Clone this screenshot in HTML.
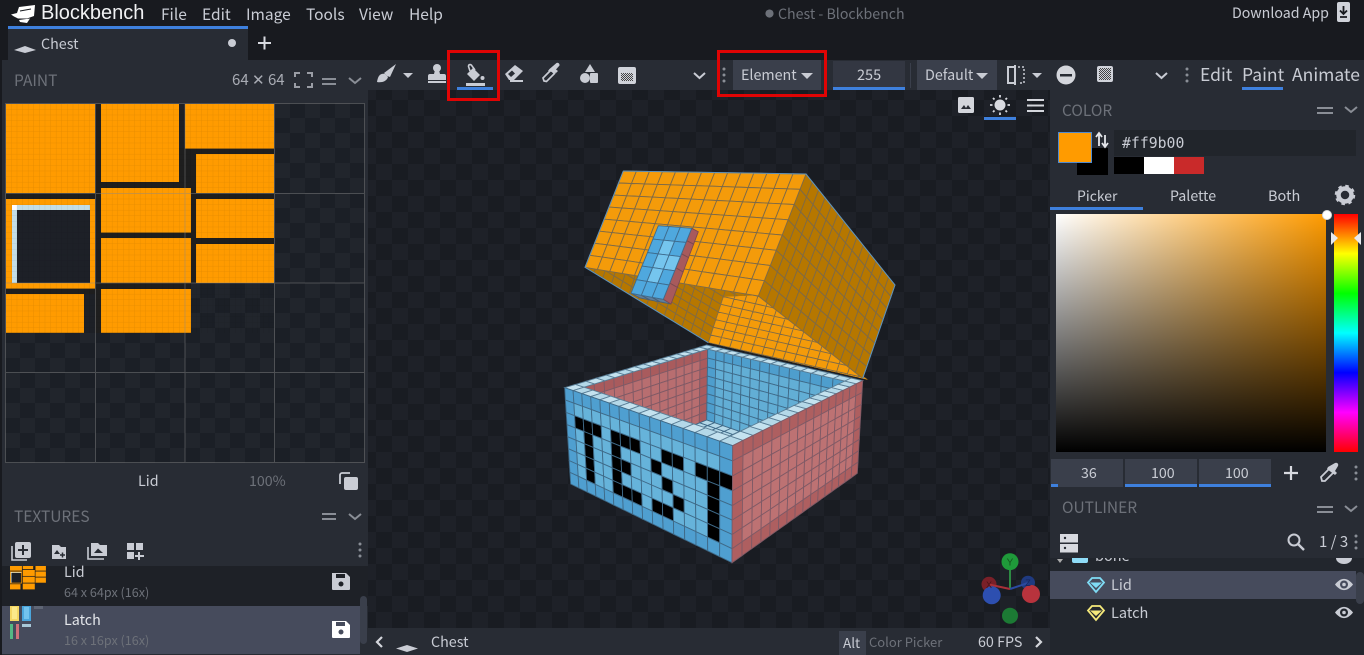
<!DOCTYPE html>
<html><head><meta charset="utf-8"><title>Chest - Blockbench</title>
<style>
html,body{margin:0;padding:0;width:1364px;height:655px;overflow:hidden;background:#181a1f}
body{position:relative;font-family:"Noto Sans CJK JP","Liberation Sans",sans-serif;color:#c9ccd4}
.b{position:absolute}
.t{position:absolute;line-height:20px;height:20px;white-space:nowrap;font-size:15px}
.g{color:#6d7179}
svg{position:absolute;left:0;top:0;overflow:hidden}
</style></head><body>
<!-- structure -->
<div class="b" style="left:2px;top:60px;width:1362px;height:30px;background:#282c34"></div>
<div class="b" style="left:8px;top:26px;width:240px;height:3px;background:#3e80dd"></div>
<div class="b" style="left:8px;top:29px;width:240px;height:31px;background:#282c34"></div>
<div class="b" style="left:2px;top:90px;width:366px;height:565px;background:#282c34"></div>
<div class="b" style="left:368px;top:90px;width:682px;height:538px;background:repeating-conic-gradient(#191c22 0 25%,#1e2128 0 50%) 8px 10px/32px 32px"></div>
<div class="b" style="left:368px;top:628px;width:682px;height:27px;background:#282c34"></div>
<div class="b" style="left:1050px;top:90px;width:314px;height:565px;background:#282c34"></div>

<!-- texture canvas -->
<div class="b" style="left:5px;top:103px;width:360px;height:360px;background:repeating-conic-gradient(#1b1f26 0 25%,#21252c 0 50%) 0 0/30px 30px"></div>
<svg width="1364" height="655">
<defs><g id="tex">
<path d="M6 104H274V283H191V333H6Z" fill="#1e1e1e"/>
<path d="M84 294H95V333H84ZM179 104H185V148H179Z" fill="#1d2026"/>
<g fill="#ff9b00">
<rect x="6" y="104" width="89" height="89"/><rect x="101" y="104" width="78" height="78"/>
<rect x="185" y="104" width="89" height="44.6"/><rect x="196" y="154" width="78" height="39"/>
<rect x="101" y="188" width="90" height="44.6"/><rect x="196" y="199" width="78" height="39"/>
<rect x="101" y="238" width="90" height="44.8"/><rect x="196" y="244" width="78" height="39"/>
<path d="M6 199H95V288.6H6Z"/><rect x="6" y="294" width="78" height="38.8"/><rect x="101" y="289" width="90" height="43.8"/>
</g>
<rect x="17" y="210" width="73" height="73" fill="#1d2027"/>
<rect x="12" y="205" width="78" height="5" fill="#c3dde6"/><rect x="12" y="205" width="5" height="78" fill="#c3dde6"/><rect x="12" y="205" width="5" height="5" fill="#fff"/>
</g>
<pattern id="px" x="6" y="104" width="5.6" height="5.6" patternUnits="userSpaceOnUse"><path d="M5.6 0V5.6H0" fill="none" stroke="#000" stroke-opacity=".1" stroke-width=".8"/></pattern>
<pattern id="dz" width="2" height="2" patternUnits="userSpaceOnUse"><rect width="2" height="2" fill="#d0d3da"/><rect width="1" height="1" fill="#444"/><rect x="1" y="1" width="1" height="1" fill="#444"/></pattern>
</defs>
<use href="#tex"/>
<rect x="6" y="104" width="268" height="229" fill="url(#px)"/>
<path d="M5.5 103.500H364.500V462.500H5.500ZM95.500 104V462M185 104V462M274.500 104V462M6 193.500H364M6 283H364M6 372.500H364" fill="none" stroke="#8f8f8f" stroke-opacity=".42"/>
</svg>

<!-- lists -->
<div class="b" style="left:2px;top:566px;width:366px;height:40px;background:#1e2127"></div>
<div class="b" style="left:2px;top:606px;width:358px;height:48px;background:#464b5c"></div>
<div class="b" style="left:360px;top:596px;width:7px;height:48px;border-radius:4px;background:#3a3f4b"></div>
<div class="b" style="left:1050px;top:558px;width:314px;height:97px;background:#22262d"></div>
<div class="b" style="left:1050px;top:571px;width:306px;height:28px;background:#464b5c"></div>
<div class="b" style="left:1356px;top:572px;width:8px;height:32px;border-radius:4px;background:#3a3f4b"></div>

<!-- color panel -->
<div class="b" style="left:1077px;top:148px;width:31px;height:27px;background:#000"></div>
<div class="b" style="left:1058px;top:132px;width:32px;height:29px;background:#ff9b00;border:1px solid #4f8ad0"></div>
<div class="b" style="left:1114px;top:130px;width:242px;height:26px;background:#21252b"></div>
<div class="b" style="left:1114px;top:157px;width:30px;height:17px;background:#000"></div>
<div class="b" style="left:1144px;top:157px;width:30px;height:17px;background:#fff"></div>
<div class="b" style="left:1174px;top:157px;width:30px;height:17px;background:#c92a2a"></div>
<div class="b" style="left:1050px;top:207px;width:93px;height:3px;background:#3e80dd"></div>
<div class="b" style="left:1056px;top:214px;width:270px;height:238px;background:linear-gradient(to top,#000,rgba(0,0,0,0)),linear-gradient(to right,#fff,#ff9b00)"></div>
<div class="b" style="left:1334px;top:214px;width:24px;height:238px;background:linear-gradient(#f00,#ff0,#0f0,#0ff,#00f,#f0f,#f00)"></div>
<div class="b" style="left:1322px;top:210px;width:8px;height:8px;border-radius:50%;background:#fff;border:1px solid #ddd"></div>
<div class="b" style="left:1051px;top:459px;width:72px;height:28px;background:#3a3f4b"></div>
<div class="b" style="left:1125px;top:459px;width:72px;height:28px;background:#3a3f4b"></div>
<div class="b" style="left:1199px;top:459px;width:72px;height:28px;background:#3a3f4b"></div>
<div class="b" style="left:1051px;top:484px;width:7px;height:3px;background:#3e80dd"></div>
<div class="b" style="left:1125px;top:484px;width:72px;height:3px;background:#3e80dd"></div>
<div class="b" style="left:1199px;top:484px;width:72px;height:3px;background:#3e80dd"></div>

<!-- top toolbar widgets -->
<div class="b" style="left:733px;top:60px;width:88px;height:30px;background:#3a3f4b"></div>
<div class="b" style="left:833px;top:61px;width:72px;height:29px;background:#333742"></div>
<div class="b" style="left:833px;top:87px;width:72px;height:3px;background:#3e80dd"></div>
<div class="b" style="left:910px;top:63px;width:1px;height:25px;background:#3a3f4b"></div>
<div class="b" style="left:917px;top:60px;width:80px;height:30px;background:#3a3f4b"></div>
<div class="b" style="left:1242px;top:87px;width:41px;height:3px;background:#3e80dd"></div>
<div class="b" style="left:457px;top:87px;width:36px;height:3px;background:#3e80dd"></div>
<div class="b" style="left:984px;top:117px;width:32px;height:3px;background:#3e80dd"></div>
<div class="b" style="left:839px;top:631px;width:27px;height:24px;background:#3a3f4b"></div>

<!-- 3D model -->
<svg id="model" width="1364" height="655"></svg>

<!-- icons -->
<svg width="1364" height="655" fill="#c9ccd4">
<!-- logo -->
<path d="M11 14.500L17 13 19 7 35 5 34 16 27 18.500H18L14 16.500Z" fill="#fff"/><path d="M19 20L30 18.500 27 23 20 22Z" fill="#fff"/><path d="M20 11L31 9" stroke="#181a1f" stroke-width="1" fill="none"/>
<!-- tab icons -->
<path d="M14 50L25 46 36 50 25 53Z"/><path d="M396 648.500L407 645 418 648.500 407 652Z"/>
<circle cx="232" cy="43" r="4"/>
<path d="M258 43H271M264.500 36.500V49.500" stroke="#d8dae0" stroke-width="2" fill="none"/>
<!-- download -->
<rect x="1337" y="2" width="13" height="20" rx="2" fill="#d0d3da"/><path d="M1343.500 6V13M1340 10.500L1343.500 14 1347 10.500M1340 17H1347" stroke="#181a1f" stroke-width="1.800" fill="none"/>
<!-- brush -->
<path d="M377 82C378 76 380 73 385 74L388 77C387 81 382 83 377 82Z"/><path d="M384 73L396 64 390 77 387 76Z"/>
<path d="M403 73H413L408 78Z"/>
<!-- stamp -->
<circle cx="437" cy="68" r="4"/><path d="M435 70H439L440 74H444C445.500 74 446 75 446 76V80H428V76C428 75 428.500 74 430 74H434Z"/><rect x="428" y="81" width="18" height="2"/>
<!-- bucket -->
<path d="M467 74L473 68 480 75 474 81Z"/><path d="M470 71L468.500 66.500C468.500 64 471 64 472 66L475 70" fill="none" stroke="#c9ccd4" stroke-width="1.600"/><circle cx="482.500" cy="78" r="2"/><rect x="466" y="83" width="19" height="3"/>
<!-- eraser -->
<path d="M505 74L515 65 523 71 514 80H509Z"/><path d="M508 74L511 77 515 73.500 512 70.500Z" fill="#282c34"/><rect x="510" y="80" width="13" height="2"/>
<!-- color picker -->
<path d="M544 81L543 78 551 70 554.500 73.500 546.500 81.500Z" fill="none" stroke="#c9ccd4" stroke-width="1.700"/><path d="M549.500 69L553 66 556.500 63C558 62 560 64 559.500 65.500L556 69.500 558 71 556 73 548 71Z"/>
<!-- shapes -->
<path d="M590 64L595 72H585Z"/><circle cx="585" cy="78" r="5"/><rect x="590" y="73" width="8" height="10" rx="1"/>
<!-- dither -->
<rect x="618" y="67" width="18" height="17" rx="2" fill="#d0d3da"/><rect x="621" y="73" width="12" height="8" fill="url(#dz)"/>
<!-- chevrons -->
<g fill="none" stroke="#c9ccd4" stroke-width="2"><path d="M694 73L699.500 78 705 73"/><path d="M1156 73L1161.500 78 1167 73"/></g>
<g fill="none" stroke="#8a8e96" stroke-width="2"><path d="M349 78L355 83 361 78"/><path d="M349 514L355 519 361 514"/><path d="M1345 107L1351 112 1357 107"/><path d="M1345 506L1351 511 1357 506"/></g>
<g fill="none" stroke="#d4d6dc" stroke-width="2.200"><path d="M382 637L377 642 382 647"/><path d="M1036 637L1041 642 1036 647"/></g>
<!-- equals -->
<g fill="#8a8e96"><path d="M322 78H336V80H322ZM322 83H336V85H322Z"/><path d="M322 513H336V515H322ZM322 518H336V520H322Z"/><path d="M1317 107H1333V109H1317ZM1317 112H1333V114H1317Z"/><path d="M1317 506H1333V508H1317ZM1317 511H1333V513H1317Z"/></g>
<!-- focus -->
<path d="M295 77V73H300M307 73H312V77M312 83V87H307M300 87H295V83" fill="none" stroke="#9a9da5" stroke-width="2"/>
<!-- dots -->
<g fill="#8a8e96"><circle cx="724" cy="69" r="1.500"/><circle cx="724" cy="75" r="1.500"/><circle cx="724" cy="81" r="1.500"/><circle cx="1187" cy="69" r="1.500"/><circle cx="1187" cy="75" r="1.500"/><circle cx="1187" cy="81" r="1.500"/><circle cx="360" cy="544" r="1.500"/><circle cx="360" cy="550" r="1.500"/><circle cx="360" cy="556" r="1.500"/><circle cx="1356" cy="467" r="1.500"/><circle cx="1356" cy="473" r="1.500"/><circle cx="1356" cy="479" r="1.500"/><circle cx="1356" cy="536" r="1.500"/><circle cx="1356" cy="542" r="1.500"/><circle cx="1356" cy="548" r="1.500"/></g>
<!-- carets -->
<path d="M801 73H813L807 79Z"/><path d="M976 73H988L982 79Z"/><path d="M1032 73H1042L1037 78Z"/>
<!-- mirror -->
<path d="M1015 67H1008V83H1015" fill="none" stroke="#c9ccd4" stroke-width="2"/><path d="M1015 65V85" stroke="#c9ccd4" stroke-width="2"/><path d="M1018 67H1024V83H1018" fill="none" stroke="#c9ccd4" stroke-width="1.500" stroke-dasharray="2 2"/>
<!-- minus circle -->
<circle cx="1066" cy="75" r="9.500" fill="#d4d6dc"/><rect x="1060" y="74" width="12" height="2.500" fill="#282c34"/>
<!-- dither 2 -->
<rect x="1097" y="66" width="16" height="16" rx="2" fill="#d0d3da"/><rect x="1099" y="68" width="12" height="12" fill="url(#dz)"/>
<!-- viewport tools -->
<rect x="958" y="97" width="16" height="16" rx="1.500" fill="#d4d6dc"/><path d="M961 109L964 105 966 108 968 105 971 109Z" fill="#282c34"/>
<circle cx="1000" cy="105" r="5.500" fill="#d8dae0"/><g stroke="#d8dae0" stroke-width="1.800"><path d="M1000 95V97.500M1000 112.500V115M990 105H992.500M1007.500 105H1010M993 98L994.500 99.500M1005.500 110.500L1007 112M1007 98L1005.500 99.500M993 112L994.500 110.500"/></g>
<path d="M1027 99H1044V101H1027ZM1027 104.500H1044V106.500H1027ZM1027 110H1044V112H1027Z" fill="#d4d6dc"/>
<!-- copy -->
<path d="M350 473H342C341 473 340 474 340 475V484" fill="none" stroke="#c9ccd4" stroke-width="1.800"/><rect x="344" y="477" width="14" height="13" rx="2"/>
<!-- textures toolbar -->
<rect x="15" y="542" width="16" height="16" rx="2"/><path d="M23 545V555M18 550H28" stroke="#282c34" stroke-width="2"/><path d="M12 546V560H27" fill="none" stroke="#c9ccd4" stroke-width="1.600"/>
<path d="M52 545H59L61 547H66V559H52Z"/><path d="M60 555H65M62.500 552.500V557.500" stroke="#282c34" stroke-width="1.500"/><path d="M54 554L57 550 60 554" fill="#282c34"/>
<path d="M91 543H98L100 545H107V556H91Z"/><path d="M88 547V559H104" fill="none" stroke="#c9ccd4" stroke-width="1.600"/><path d="M94 553L98 548.500 103 553Z" fill="#282c34"/>
<rect x="127" y="543" width="7" height="7"/><rect x="136" y="543" width="7" height="7"/><rect x="127" y="552" width="7" height="7"/><path d="M139 552V560M135 556H144" stroke="#c9ccd4" stroke-width="2"/>
<!-- save -->
<path d="M332 573H346L350 577V589C350 590 349 590 348 590H334C333 590 332 590 332 589Z"/><rect x="336" y="574" width="9" height="4" fill="#1e2127"/><circle cx="341" cy="584" r="2.500" fill="#1e2127"/>
<path d="M332 621H346L350 625V637C350 638 349 638 348 638H334C333 638 332 638 332 637Z" fill="#fff"/><rect x="336" y="622" width="9" height="4" fill="#464b5c"/><circle cx="341" cy="632" r="2.500" fill="#464b5c"/>
<!-- thumbs -->
<svg x="0" y="566" width="60" height="24" style="overflow:hidden"><g transform="translate(9.200 -21.200) scale(.134)"><use href="#tex"/></g></svg>
<rect x="10" y="606" width="9" height="15" fill="#f4d763"/><rect x="12" y="607" width="5" height="12" fill="#fbe98a"/>
<rect x="22" y="606" width="9" height="15" fill="#4ba6dc"/><rect x="24" y="607" width="5" height="12" fill="#73c3ee"/>
<rect x="34" y="606" width="9" height="3" fill="#5f6675"/><rect x="22" y="624" width="9" height="3" fill="#a9c8d8"/>
<rect x="10" y="624" width="3" height="15" fill="#55b884"/><rect x="16" y="624" width="3" height="15" fill="#d0707a"/>
<!-- arrows swap -->
<path d="M1099 146V134M1096 137L1099 133 1102 137M1105 135V146M1102 143L1105 147 1108 143" fill="none" stroke="#e4e6ea" stroke-width="1.800"/>
<!-- gear -->
<circle cx="1345" cy="195" r="6.500" fill="none" stroke="#c9ccd4" stroke-width="4.500"/><circle cx="1345" cy="195" r="9" fill="none" stroke="#c9ccd4" stroke-width="2.500" stroke-dasharray="3.500 3.570"/>
<!-- hue handles -->
<path d="M1331 232L1338 238 1331 245Z" fill="#e8eaee"/><path d="M1361 232L1354 238 1361 245Z" fill="#e8eaee"/>
<!-- plus + eyedropper -->
<path d="M1284 473H1298M1291 466V480" stroke="#d8dae0" stroke-width="2.200" fill="none"/>
<path d="M1322 481L1321 477 1330 468 1334 472 1325 481Z" fill="none" stroke="#c9ccd4" stroke-width="1.800"/><path d="M1328 467L1335 463C1337 462 1339 464 1338 466L1335 471 1337 473 1335 475 1327 469Z"/>
<!-- outliner toolbar -->
<rect x="1060" y="534" width="18" height="8.500" fill="#d8dae0"/><rect x="1060" y="544" width="18" height="8.500" fill="#d8dae0"/><circle cx="1065" cy="538" r="1.200" fill="#282c34"/><circle cx="1065" cy="548" r="1.200" fill="#282c34"/>
<circle cx="1294" cy="540" r="5.500" fill="none" stroke="#c9ccd4" stroke-width="2"/><path d="M1298 544L1304 550" stroke="#c9ccd4" stroke-width="2.400"/>
<!-- gems -->
<path d="M1092 578H1100L1104 582.500 1096 592 1088 582.500Z" fill="none" stroke="#7fdcf5" stroke-width="1.800"/><path d="M1090 582.500H1102L1096 588Z" fill="#7fdcf5"/>
<path d="M1092 606H1100L1104 610.500 1096 620 1088 610.500Z" fill="none" stroke="#f5e97a" stroke-width="1.800"/><path d="M1090 610.500H1102L1096 616Z" fill="#f5e97a"/>
<!-- eyes -->
<path d="M1335 584.500C1341 577 1347 577 1353 584.500 1347 592 1341 592 1335 584.500Z" fill="#c9ccd4"/><circle cx="1344" cy="584.500" r="4" fill="#464b5c"/><circle cx="1344" cy="584.500" r="1.800" fill="#c9ccd4"/>
<path d="M1335 612.500C1341 605 1347 605 1353 612.500 1347 620 1341 620 1335 612.500Z" fill="#c9ccd4"/><circle cx="1344" cy="612.500" r="4" fill="#22262d"/><circle cx="1344" cy="612.500" r="1.800" fill="#c9ccd4"/>
<!-- gizmo -->
<path d="M1010 562V589" stroke="#2d8a43" stroke-width="2"/>
<circle cx="989" cy="584.300" r="7.500" fill="#7a2028"/><circle cx="1028" cy="582.700" r="7" fill="#1f3a80"/>
<path d="M1010 589L989 584.500" stroke="#a83038" stroke-width="2"/><path d="M1010 589L1028 583" stroke="#2a4aa0" stroke-width="2"/>
<circle cx="1010" cy="561.700" r="8.500" fill="#1f9a3a"/><circle cx="1010" cy="615.700" r="8" fill="#1c7a34"/>
<circle cx="1031" cy="594" r="9" fill="#b8333d"/><circle cx="991.700" cy="595.300" r="9" fill="#2d4fb0"/>
<text x="1010" y="565.500" font-size="10" text-anchor="middle" fill="#14561f" font-family="Liberation Sans">Y</text>
<text x="989" y="588" font-size="9" text-anchor="middle" fill="#4a1218" font-family="Liberation Sans">X</text>
<text x="1028" y="586" font-size="9" text-anchor="middle" fill="#14255a" font-family="Liberation Sans">Z</text>
</svg>

<!-- outliner bone row -->
<div class="b" style="left:1050px;top:558px;width:306px;height:13px;overflow:hidden">
<div class="t" style="left:45px;top:-12px;font-size:14.500px">bone</div>
<div class="b" style="left:22px;top:0;width:16px;height:5px;background:#8fdcf7;border-radius:0 0 2px 2px"></div>
<div class="b" style="left:7px;top:1px;width:0;height:0;border:3px solid transparent;border-top:4px solid #aaa"></div>
<div class="b" style="left:286px;top:-6px;width:16px;height:12px;border-radius:50%;background:#c9ccd4"></div>
</div>

<!-- text -->
<div class="t" style="left:41px;top:3px;font:20px/20px 'Liberation Sans',sans-serif;color:#f0f1f3">Blockbench</div>
<div class="t" style="left:161px;top:4px;font-size:15.500px">File</div>
<div class="t" style="left:202px;top:4px;font-size:15.500px">Edit</div>
<div class="t" style="left:246px;top:4px;font-size:15.500px">Image</div>
<div class="t" style="left:306px;top:4px;font-size:15.500px">Tools</div>
<div class="t" style="left:359px;top:4px;font-size:15.500px">View</div>
<div class="t" style="left:409px;top:4px;font-size:15.500px">Help</div>
<div class="t g" style="left:765px;top:4px;font-size:9px">●</div>
<div class="t g" style="left:778px;top:4px;font-size:14.200px">Chest - Blockbench</div>
<div class="t" style="left:1232px;top:3px;font-size:14.200px">Download App</div>
<div class="t" style="left:41px;top:34px;font-size:14.300px">Chest</div>
<div class="t g" style="left:14px;top:70px;font-size:15.500px">PAINT</div>
<div class="t" style="left:232px;top:70px;font-size:15px;color:#a8abb3">64 ✕ 64</div>
<div class="t" style="left:741px;top:65px;font-size:14.300px">Element</div>
<div class="t" style="left:857px;top:65px;font-size:14.500px">255</div>
<div class="t" style="left:925px;top:65px;font-size:14.300px">Default</div>
<div class="t" style="left:1200px;top:65px;font-size:17.500px">Edit</div>
<div class="t" style="left:1242px;top:65px;font-size:17.500px">Paint</div>
<div class="t" style="left:1292px;top:65px;font-size:17.500px">Animate</div>
<div class="t g" style="left:1062px;top:100px;font-size:15.500px">COLOR</div>
<div class="t" style="left:1122px;top:134px;font:14.800px/20px 'DejaVu Sans Mono',monospace">#ff9b00</div>
<div class="t" style="left:1077px;top:186px;font-size:14px">Picker</div>
<div class="t" style="left:1170px;top:186px;font-size:14.200px">Palette</div>
<div class="t" style="left:1268px;top:186px;font-size:14.500px">Both</div>
<div class="t" style="left:1081px;top:463px;font-size:14.200px">36</div>
<div class="t" style="left:1151px;top:463px;font-size:14.200px">100</div>
<div class="t" style="left:1225px;top:463px;font-size:14.200px">100</div>
<div class="t g" style="left:1062px;top:497px;font-size:15.500px">OUTLINER</div>
<div class="t" style="left:1319px;top:532px;font-size:15px">1 / 3</div>
<div class="t" style="left:1111px;top:575px;font-size:14.500px">Lid</div>
<div class="t" style="left:1111px;top:603px;font-size:14.500px">Latch</div>
<div class="t" style="left:138px;top:471px;font-size:14.300px">Lid</div>
<div class="t g" style="left:249px;top:471px;font-size:14.200px">100%</div>
<div class="t g" style="left:14px;top:506px;font-size:15.500px">TEXTURES</div>
<div class="t" style="left:64px;top:562px;font-size:14.300px">Lid</div>
<div class="t g" style="left:64px;top:582px;font-size:12.600px">64 x 64px (16x)</div>
<div class="t" style="left:64px;top:610px;font-size:14.300px;color:#e4e6ea">Latch</div>
<div class="t g" style="left:64px;top:630px;font-size:12.600px">16 x 16px (16x)</div>
<div class="t" style="left:431px;top:632px;font-size:14.300px">Chest</div>
<div class="t" style="left:843px;top:632px;font-size:13.500px">Alt</div>
<div class="t g" style="left:869px;top:632px;font-size:13px">Color Picker</div>
<div class="t" style="left:978px;top:632px;font-size:14.300px">60 FPS</div>

<!-- red boxes -->
<div class="b" style="left:447px;top:50px;width:47px;height:45px;border:3px solid #e00404"></div>
<div class="b" style="left:717px;top:50px;width:104px;height:41px;border:3px solid #e00404"></div>

<script>
(function(){
function H(q){var x0=q[0][0],y0=q[0][1],x1=q[1][0],y1=q[1][1],x2=q[2][0],y2=q[2][1],x3=q[3][0],y3=q[3][1];
var dx1=x1-x2,dx2=x3-x2,sx=x0-x1+x2-x3,dy1=y1-y2,dy2=y3-y2,sy=y0-y1+y2-y3,det=dx1*dy2-dx2*dy1;
var g=(sx*dy2-dx2*sy)/det,h=(dx1*sy-sx*dy1)/det;
var a=x1-x0+g*x1,b=x3-x0+h*x3,d=y1-y0+g*y1,e=y3-y0+h*y3;
return function(u,v){var w=g*u+h*v+1;return [(a*u+b*v+x0)/w,(d*u+e*v+y0)/w];};}
function BL(q){return function(u,v){var a=(1-u)*(1-v),b=u*(1-v),c=u*v,d=(1-u)*v;
return [a*q[0][0]+b*q[1][0]+c*q[2][0]+d*q[3][0],a*q[0][1]+b*q[1][1]+c*q[2][1]+d*q[3][1]];};}
var out=[],cid=0;
function pts(a){return a.map(function(p){return p[0].toFixed(1)+','+p[1].toFixed(1);}).join(' ');}
function faceT(T,c,r,col,st){for(var j=0;j<r;j++)for(var i=0;i<c;i++){var f=col(i,j);if(!f)continue;
out.push('<polygon points="'+pts([T(i/c,j/r),T((i+1)/c,j/r),T((i+1)/c,(j+1)/r),T(i/c,(j+1)/r)])+'" fill="'+f+'" stroke="'+st+'" stroke-width=".9"/>');}}
function face(q,c,r,col,st){faceT(H(q),c,r,col,st);}
function faceB(q,c,r,col,st){faceT(BL(q),c,r,col,st);}
function outline(a,s){out.push('<polyline points="'+pts(a)+'" fill="none" stroke="'+s+'" stroke-width="1"/>');}
function gridClip(poly,o,u,v,fill,st){var id='cp'+(cid++);
out.push('<clipPath id="'+id+'"><polygon points="'+pts(poly)+'"/></clipPath><g clip-path="url(#'+id+')"><polygon points="'+pts(poly)+'" fill="'+fill+'"/>');
var s='';for(var k=-18;k<=18;k++){
s+='M'+(o[0]+k*u[0]-18*v[0]).toFixed(1)+' '+(o[1]+k*u[1]-18*v[1]).toFixed(1)+'L'+(o[0]+k*u[0]+18*v[0]).toFixed(1)+' '+(o[1]+k*u[1]+18*v[1]).toFixed(1);
s+='M'+(o[0]+k*v[0]-18*u[0]).toFixed(1)+' '+(o[1]+k*v[1]-18*u[1]).toFixed(1)+'L'+(o[0]+k*v[0]+18*u[0]).toFixed(1)+' '+(o[1]+k*v[1]+18*u[1]).toFixed(1);}
out.push('<path d="'+s+'" fill="none" stroke="'+st+'" stroke-width=".9"/></g>');}
function z7(x,y){return [560+x/3,160+y/3];}
function z8(x,y){return [550+x/3,340+y/3];}
var lidLine='#7d6a48',lit='#f49b0a',dark='#b67700';
/* lid underside */
gridClip([z7(75,322),z7(595,408),z7(445,548)],z7(445,548),[-8.8,-5.37],[2.5,-7.67],dark,lidLine);
gridClip([z7(490,410),z7(605,405),z7(925,660),z7(445,548)],z7(445,548),[10.7,2.4],[2.5,-7.67],lit,lidLine);
/* lid side and top */
faceB([z7(738,42),z7(1005,375),z7(908,655),z7(595,408)],14,8,function(){return dark;},lidLine);
faceB([z7(190,33),z7(738,42),z7(595,408),z7(75,322)],14,8,function(){return lit;},lidLine);
outline([z7(190,33),z7(738,42),z7(1005,375),z7(908,655)],'#5c93bf');
outline([z7(190,33),z7(75,322),z7(445,548)],'#5c93bf');
/* latch */
face([z7(213,400),z7(310,418),z7(333,432),z7(240,414)],3,1,function(){return '#5d7f9e';},'#4a6074');
face([z7(395,205),z7(415,215),z7(333,432),z7(310,418)],1,5,function(){return '#a85a5c';},'#7d4a50');
face([z7(295,197),z7(395,205),z7(310,418),z7(213,400)],3,5,function(i,j){return (i==1&&j>0&&j<4)||(i==2&&j>1&&j<3)?'#75c5ee':'#4fa8de';},'#3f6c8e');
/* base */
var A=z8(44,143),B=z8(470,15),C=z8(938,122),D=z8(548,317),T=H([A,B,C,D]);
var e=1/16,IL=T(e,e),IB=T(1-e,e),IR=T(1-e,1-e),IF=T(e,1-e);
var IBb=z8(470,240),ILb=[IL[0]+5,IL[1]+80],IRb=[IR[0]-5,IR[1]+85],IFb=[IF[0],IF[1]+105];
var bl='#3f6a88',rl='#7f5a66';
function blue(i,j,c,r){return (i==0||j==0||i==c-1||j==r-1)?'#4f9fd0':'#66b3da';}
function red(i,j,c,r){return (i==0||j==0||i==c-1||j==r-1)?'#ae5f60':'#bd7273';}
face([IL,IB,IBb,ILb],14,8,function(i,j){return j==0||i==13?'#a95b5d':'#b86e70';},rl);
face([IB,IR,IRb,IBb],14,8,function(i,j){return j==0||i==0?'#4e9ecd':'#62aed5';},bl);
face([ILb,IBb,IRb,IFb],14,14,function(i,j){return (i+j)%9==0?'#e8f4fa':'#b4d8e8';},bl);
face([A,B,C,D],16,16,function(i,j){return (i==0||j==0||i==15||j==15)?((i+j)%2?'#b4d8e8':'#c4e2ef'):null;},'#5a7e96');
var msg={};
[[1,2],[2,2],[3,2],[2,3],[2,4],[2,5],[2,6],
 [5,2],[6,2],[7,2],[5,3],[5,4],[6,4],[5,5],[5,6],[6,6],[7,6],
 [10,2],[11,2],[9,3],[10,4],[11,5],[9,6],[10,6],
 [13,2],[14,2],[15,2],[14,3],[14,4],[14,5],[14,6]].forEach(function(p){msg[p[0]+'_'+p[1]]=1;});
face([A,D,z8(546,668),z8(62,432)],16,8,function(i,j){return msg[i+'_'+j]?'#000':blue(i,j,16,8);},bl);
face([D,C,z8(922,400),z8(546,668)],16,8,function(i,j){return red(i,j,16,8);},rl);
document.getElementById('model').innerHTML=out.join('');
})();
</script>
</body></html>
